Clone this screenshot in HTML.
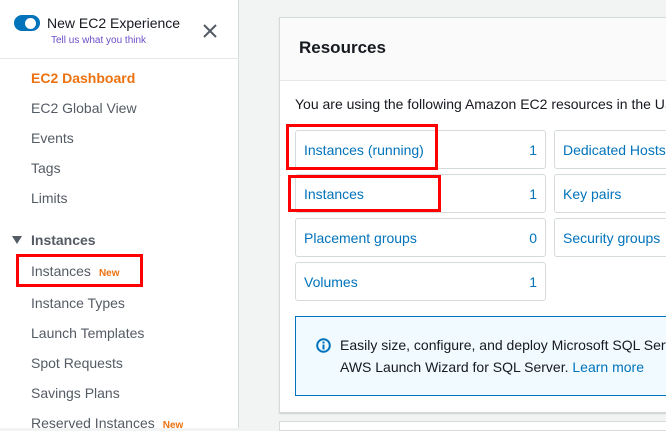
<!DOCTYPE html>
<html><head><style>
*{margin:0;padding:0;box-sizing:border-box}
body{width:666px;height:428px;overflow:hidden;background:#f2f3f3;font-family:"Liberation Sans",Arial,sans-serif;position:relative;color:#16191f}
.a{position:absolute;white-space:nowrap}
.side{position:absolute;left:0;top:0;width:239px;height:428px;background:#fff;border-right:1px solid #d5dbdb}
.nav{font-size:14px;color:#545b64;left:31px}
.new{color:#ec7211;font-size:10px;font-weight:bold;margin-left:8px}
.red{position:absolute;border:3px solid #f00}
.tile{position:absolute;background:#fff;border:1px solid #d5dbdb;border-radius:3px;height:39px;font-size:14px;color:#0073bb;padding:11px 8px}
.tile b{position:absolute;right:8px;top:11px;font-weight:normal;color:#0073bb}
</style></head><body>
<div class="side">
  <div class="a" style="left:14px;top:15px;width:26px;height:16px;border-radius:8px;background:#0073bb"></div>
  <div class="a" style="left:25px;top:18px;width:11px;height:11px;border-radius:50%;background:#fff"></div>
  <div class="a" style="left:47px;top:15px;font-size:14px;color:#16191f">New EC2 Experience</div>
  <div class="a" style="left:51px;top:35px;font-size:10px;color:#6c4fc8">Tell us what you think</div>
  <svg class="a" style="left:203px;top:24px" width="14" height="14"><path d="M1 1L13 13M13 1L1 13" stroke="#545b64" stroke-width="2"/></svg>
  <div class="a" style="left:0;top:58px;width:239px;border-top:1px solid #e5e7e8"></div>
  <div class="a nav" style="top:70px;color:#ec7211;font-weight:bold">EC2 Dashboard</div>
  <div class="a nav" style="top:100px">EC2 Global View</div>
  <div class="a nav" style="top:130px">Events</div>
  <div class="a nav" style="top:160px">Tags</div>
  <div class="a nav" style="top:190px">Limits</div>
  <svg class="a" style="left:12px;top:236px" width="10" height="8"><path d="M0 0H10L5 8Z" fill="#545b64"/></svg>
  <div class="a nav" style="top:232px;font-weight:bold;color:#545b64">Instances</div>
  <div class="a nav" style="top:263px">Instances<span class="new">New</span></div>
  <div class="a nav" style="top:295px">Instance Types</div>
  <div class="a nav" style="top:325px">Launch Templates</div>
  <div class="a nav" style="top:355px">Spot Requests</div>
  <div class="a nav" style="top:385px">Savings Plans</div>
  <div class="a nav" style="top:415px">Reserved Instances<span class="new">New</span></div>
</div>
<div class="a" style="left:279px;top:17px;width:400px;height:396px;background:#fff;border:1px solid #d5dbdb;box-shadow:0 1px 1px rgba(0,0,0,.15)"></div>
<div class="a" style="left:280px;top:18px;width:400px;height:63px;background:#fafafa;border-bottom:1px solid #e5e7e8"></div>
<div class="a" style="left:299px;top:38px;font-size:17px;font-weight:bold">Resources</div>
<div class="a" style="left:295px;top:96px;font-size:14px">You are using the following Amazon EC2 resources in the US</div>
<div class="tile" style="left:295px;top:130px;width:251px">Instances (running)<b>1</b></div>
<div class="tile" style="left:295px;top:174px;width:251px">Instances<b>1</b></div>
<div class="tile" style="left:295px;top:218px;width:251px">Placement groups<b>0</b></div>
<div class="tile" style="left:295px;top:262px;width:251px">Volumes<b>1</b></div>
<div class="tile" style="left:554px;top:130px;width:140px">Dedicated Hosts</div>
<div class="tile" style="left:554px;top:174px;width:140px">Key pairs</div>
<div class="tile" style="left:554px;top:218px;width:140px">Security groups</div>
<div class="a" style="left:295px;top:316px;width:400px;height:80px;background:#f1faff;border:1px solid #0073bb"></div>
<svg class="a" style="left:316px;top:338px" width="15" height="15"><circle cx="7.5" cy="7.5" r="6.3" fill="none" stroke="#0073bb" stroke-width="2"/><rect x="6.5" y="6.5" width="2" height="5" fill="#0073bb"/><rect x="6.5" y="3.5" width="2" height="2" fill="#0073bb"/></svg>
<div class="a" style="left:340px;top:334px;font-size:14px;line-height:22px">Easily size, configure, and deploy Microsoft SQL Server<br>AWS Launch Wizard for SQL Server. <span style="color:#0073bb">Learn more</span></div>
<div class="a" style="left:279px;top:421px;width:400px;height:10px;background:#fff;border:1px solid #d5dbdb"></div>
<div class="red" style="left:286px;top:124px;width:152px;height:46px"></div>
<div class="red" style="left:288px;top:175px;width:153px;height:37px"></div>
<div class="red" style="left:16px;top:254px;width:127px;height:33px"></div>
</body></html>
